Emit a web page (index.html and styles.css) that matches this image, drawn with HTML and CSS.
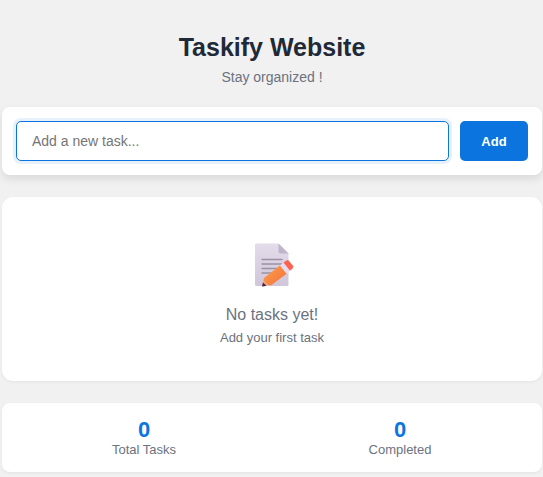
FILE: index.html
```html
<!DOCTYPE html>
<html lang="en">
<head>
<meta charset="utf-8">
<meta name="viewport" content="width=device-width, initial-scale=1">
<title>Taskify Website</title>
<link rel="stylesheet" href="styles.css">
</head>
<body>
<main class="app">
  <header class="header">
    <h1 class="title">Taskify Website</h1>
    <p class="subtitle">Stay organized !</p>
  </header>
  <form class="card task-form">
    <input class="task-input" type="text" placeholder="Add a new task..." aria-label="New task">
    <button class="add-button" type="button">Add</button>
  </form>
  <section class="card empty">
    <svg class="empty-icon" viewBox="0 0 44 46" aria-hidden="true">
      <defs>
        <linearGradient id="paper" x1="0" y1="0" x2="0" y2="1">
          <stop offset="0" stop-color="#e3dcea"/>
          <stop offset="1" stop-color="#d0c6da"/>
        </linearGradient>
        <linearGradient id="wood" x1="0" y1="0" x2="1" y2="1">
          <stop offset="0" stop-color="#ffa143"/>
          <stop offset="1" stop-color="#f2703f"/>
        </linearGradient>
      </defs>
      <path fill="url(#paper)" d="M6.500 1.500H28.500L38.500 11.500V42.500Q38.500 44 37 44H6.500Q5 44 5 42.500V3Q5 1.500 6.500 1.500Z"/>
      <path fill="#bfb4ca" d="M28.500 1.500L38.500 11.500H30.500Q28.500 11.500 28.500 9.500Z"/>
      <path fill="none" stroke="#9a91a4" stroke-width="1.400" stroke-linecap="round" d="M12 17.500H32M12 22H32M12 26.500H29M12 31H23"/>
      <path fill="#f2a67c" d="M12 44L14 36L21.500 43Z"/>
      <path fill="url(#wood)" d="M14 36L30.500 23L37 31.500L21.500 43Q19 44 17 41.500Q13 39 14 36Z"/>
      <path fill="#e8dcf0" d="M30 23.400L33.500 20.500L40 28.800L36.500 31.800Z"/>
      <path fill="#ff6350" d="M33.500 20.500L36.500 18.500Q38 17.500 39 19L43 23.800Q43.800 25 42.800 26.200L40 28.800Z"/>
      <path fill="#46283f" d="M12 44.400L13 40.500L16.500 43.800L13 44.600Z"/>
    </svg>
    <p class="empty-title">No tasks yet!</p>
    <p class="empty-hint">Add your first task</p>
  </section>
  <section class="card stats">
    <div class="stat"><span class="stat-value">0</span><span class="stat-label">Total Tasks</span></div>
    <div class="stat"><span class="stat-value">0</span><span class="stat-label">Completed</span></div>
  </section>
</main>
</body>
</html>
```
FILE: styles.css
```css
* { box-sizing: border-box; margin: 0; padding: 0; }

body {
  background: #f1f1f1;
  color: #6b7280;
  font-family: "Liberation Sans", Arial, sans-serif;
}

.app {
  display: flex;
  flex-direction: column;
  gap: 22px;
  padding: 32px 1px 4px 2px;
}

.header { text-align: center; }

.title {
  color: #1f2937;
  font-size: 25px;
  line-height: 30px;
  margin-bottom: 7px;
}

.subtitle { font-size: 14px; line-height: 16px; }

.card {
  background: #fff;
  border-radius: 8px;
  box-shadow: 0 1px 3px rgba(0, 0, 0, 0.06);
}

.task-form {
  display: flex;
  gap: 11px;
  padding: 14px;
  box-shadow: 0 4px 8px rgba(0, 0, 0, 0.1);
}

.task-input {
  flex: 1;
  min-width: 0;
  height: 40px;
  padding: 0 15px;
  border: 1px solid #0b74de;
  border-radius: 5px;
  outline: none;
  box-shadow: 0 0 0 3px #e7f1fc;
  color: #1f2937;
  font: 14px "Liberation Sans", Arial, sans-serif;
}

.task-input::placeholder { color: #757575; }

.add-button {
  min-width: 68px;
  padding: 0 20px;
  border: 0;
  border-radius: 5px;
  background: #0b74de;
  color: #fff;
  font: bold 13px "Liberation Sans", Arial, sans-serif;
}

.empty {
  display: flex;
  flex-direction: column;
  align-items: center;
  padding: 45px 14px 34px;
  border-radius: 11px;
}

.empty-icon { width: 44px; height: 46px; margin-bottom: 17px; }
.empty-title { font-size: 16px; line-height: 20px; margin-bottom: 4px; }
.empty-hint { font-size: 13px; line-height: 18px; }

.stats {
  display: grid;
  grid-template-columns: 1fr 1fr;
  padding: 14px;
}

.stat { display: flex; flex-direction: column; align-items: center; }
.stat-value { color: #0b74de; font-size: 22px; font-weight: bold; line-height: 25px; }
.stat-label { font-size: 13px; line-height: 16px; }
```
